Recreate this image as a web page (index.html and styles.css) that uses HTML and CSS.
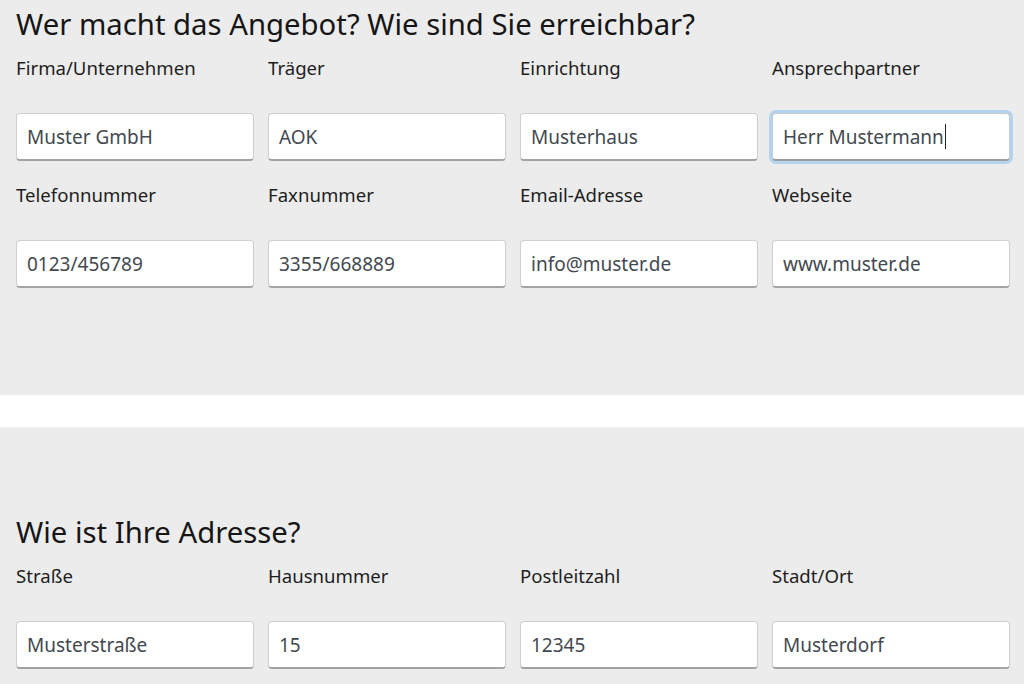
FILE: index.html
```html
<!DOCTYPE html>
<html lang="de">
<head>
<meta charset="utf-8">
<title>Angebot</title>
<link rel="stylesheet" href="styles.css">
</head>
<body>
  <section class="block block-contact">
    <h2 class="block-title">Wer macht das Angebot? Wie sind Sie erreichbar?</h2>
    <div class="fields">
      <label class="field"><span class="field-label">Firma/Unternehmen</span><input class="field-input" type="text" value="Muster GmbH"></label>
      <label class="field"><span class="field-label">Träger</span><input class="field-input" type="text" value="AOK"></label>
      <label class="field"><span class="field-label">Einrichtung</span><input class="field-input" type="text" value="Musterhaus"></label>
      <label class="field"><span class="field-label">Ansprechpartner</span><span class="field-input is-focused">Herr Mustermann<span class="caret"></span></span></label>
      <label class="field"><span class="field-label">Telefonnummer</span><input class="field-input" type="text" value="0123/456789"></label>
      <label class="field"><span class="field-label">Faxnummer</span><input class="field-input" type="text" value="3355/668889"></label>
      <label class="field"><span class="field-label">Email-Adresse</span><input class="field-input" type="text" value="info@muster.de"></label>
      <label class="field"><span class="field-label">Webseite</span><input class="field-input" type="text" value="www.muster.de"></label>
    </div>
  </section>
  <section class="block block-address">
    <h2 class="block-title">Wie ist Ihre Adresse?</h2>
    <div class="fields">
      <label class="field"><span class="field-label">Straße</span><input class="field-input" type="text" value="Musterstraße"></label>
      <label class="field"><span class="field-label">Hausnummer</span><input class="field-input" type="text" value="15"></label>
      <label class="field"><span class="field-label">Postleitzahl</span><input class="field-input" type="text" value="12345"></label>
      <label class="field"><span class="field-label">Stadt/Ort</span><input class="field-input" type="text" value="Musterdorf"></label>
    </div>
  </section>
</body>
</html>
```
FILE: styles.css
```css
html, body {
  margin: 0;
  padding: 0;
  background: #ffffff;
}

body {
  font-family: "Noto Sans", "Open Sans", sans-serif;
  color: #1c1c1c;
  overflow: hidden;
}

.block {
  background: #ececec;
  padding: 4px 14px 0 16px;
}

.block-contact {
  padding-bottom: 107px;
  margin-bottom: 32px;
}

.block-address {
  padding-top: 85px;
  padding-bottom: 20px;
}

.block-title {
  margin: 0 0 12px;
  font-size: 29.3px;
  font-weight: 400;
  line-height: 40px;
  color: #161616;
}

.fields {
  display: grid;
  grid-template-columns: repeat(4, 238px);
  column-gap: 14px;
  row-gap: 22px;
}

.field {
  display: flex;
  flex-direction: column;
}

.field-label {
  font-size: 18.6px;
  line-height: 24px;
  margin-bottom: 33px;
  color: #1e1e1e;
}

.field-input {
  box-sizing: border-box;
  width: 238px;
  height: 48px;
  margin: 0;
  padding: 0 10px;
  font-family: inherit;
  font-size: 19px;
  color: #434950;
  background: #ffffff;
  border: 1px solid #cfcfcf;
  border-bottom: 2px solid #a3a3a3;
  border-radius: 4px;
  outline: none;
  display: flex;
  align-items: center;
}

.field-input.is-focused {
  box-shadow: 0 0 0 3px #b4d3ef;
  border-color: #c9c9c9;
  border-bottom-color: #9d9d9d;
}

.caret {
  display: inline-block;
  width: 1px;
  height: 25px;
  background: #222;
  margin-left: 1px;
}
```
